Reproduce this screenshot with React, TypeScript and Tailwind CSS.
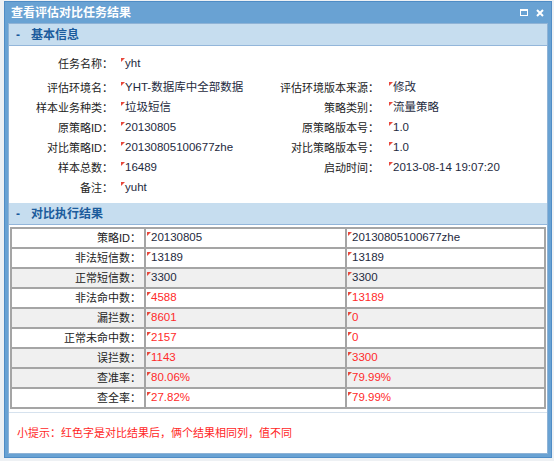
import React from "react";

const FONT = { fontFamily: '"Liberation Sans", "Noto Sans CJK SC", sans-serif' };

function Mark() {
  return (
    <span className="absolute left-0 top-[1px] w-0 h-0 border-t-[4px] border-t-[#e8483c] border-r-[4px] border-r-transparent" />
  );
}

function Val({ children, red = false }: { children: React.ReactNode; red?: boolean }) {
  return (
    <span className={"relative pl-[4px] text-[11.5px] " + (red ? "text-[#ff2a2a]" : "text-[#1e2a3e]")}>
      <Mark />
      {children}
    </span>
  );
}

function SectionHeader({ title }: { title: string }) {
  return (
    <div className="h-[22px] bg-[#c6ddef] border-b border-[#93b6da] flex items-center pl-[7px] text-[12px] font-bold text-[#1b5b9c]">
      <span className="w-[15px]">-</span>
      <span>{title}</span>
    </div>
  );
}

type Row = { l1: string; v1?: string; l2?: string; v2?: string };

const formRows: Row[] = [
  { l1: "评估环境名：", v1: "YHT-数据库中全部数据", l2: "评估环境版本来源：", v2: "修改" },
  { l1: "样本业务种类：", v1: "垃圾短信", l2: "策略类别：", v2: "流量策略" },
  { l1: "原策略ID：", v1: "20130805", l2: "原策略版本号：", v2: "1.0" },
  { l1: "对比策略ID：", v1: "20130805100677zhe", l2: "对比策略版本号：", v2: "1.0" },
  { l1: "样本总数：", v1: "16489", l2: "启动时间：", v2: "2013-08-14 19:07:20" },
  { l1: "备注：", v1: "yuht" },
];

type TRow = { label: string; a: string; b: string; red: boolean; gray: boolean };
const tableRows: TRow[] = [
  { label: "策略ID：", a: "20130805", b: "20130805100677zhe", red: false, gray: false },
  { label: "非法短信数：", a: "13189", b: "13189", red: false, gray: false },
  { label: "正常短信数：", a: "3300", b: "3300", red: false, gray: true },
  { label: "非法命中数：", a: "4588", b: "13189", red: true, gray: false },
  { label: "漏拦数：", a: "8601", b: "0", red: true, gray: true },
  { label: "正常未命中数：", a: "2157", b: "0", red: true, gray: false },
  { label: "误拦数：", a: "1143", b: "3300", red: true, gray: true },
  { label: "查准率：", a: "80.06%", b: "79.99%", red: true, gray: true },
  { label: "查全率：", a: "27.82%", b: "79.99%", red: true, gray: false },
];

export default function App() {
  return (
    <div className="w-[554px] h-[461px] bg-[#eef1f4] overflow-hidden pt-[1px] pl-[4px]" style={FONT}>
      <div className="w-[548px] h-[457px] bg-[#69a2d3] border border-[#4f8cc5] flex flex-col px-[3px] pb-[3px]">
        {/* title bar */}
        <div className="h-[21px] flex items-center justify-between pl-[3px] pr-[4px] shrink-0">
          <span className="text-white text-[12px] font-bold">查看评估对比任务结果</span>
          <div className="flex items-center gap-[8px]">
            <span className="w-[8px] h-[7px] border border-white border-t-[2px]" />
            <svg width="8" height="8" viewBox="0 0 8 8">
              <path d="M1 1 L7 7 M7 1 L1 7" stroke="white" strokeWidth="2" />
            </svg>
          </div>
        </div>
        {/* body */}
        <div className="flex-1 bg-white flex flex-col border border-[#8fb3d6]">
          <SectionHeader title="基本信息" />
          <div className="h-[157px] text-[11px] text-[#222] pt-[8px]">
            <div className="grid grid-cols-[104px_166px_100px_1fr] h-[20px] items-center">
              <span className="text-right">任务名称：</span>
              <span className="pl-[8px]"><Val>yht</Val></span>
              <span />
              <span />
            </div>
            <div className="h-[4px]" />
            {formRows.map((r, i) => (
              <div key={i} className="grid grid-cols-[104px_166px_100px_1fr] h-[20px] items-center">
                <span className="text-right whitespace-nowrap">{r.l1}</span>
                <span className="pl-[8px] whitespace-nowrap">{r.v1 && <Val>{r.v1}</Val>}</span>
                <span className="text-right whitespace-nowrap">{r.l2}</span>
                <span className="pl-[10px] whitespace-nowrap">{r.v2 && <Val>{r.v2}</Val>}</span>
              </div>
            ))}
          </div>
          <SectionHeader title="对比执行结果" />
          <div className="pt-[2px] pl-[1px] pr-[1px]">
            <table className="w-full border-collapse border-2 border-[#a5a5a5] text-[11px] text-[#222]">
              <colgroup>
                <col className="w-[134px]" />
                <col className="w-[201px]" />
                <col />
              </colgroup>
              <tbody>
                {tableRows.map((r, i) => (
                  <tr key={i} className={"h-[20px] " + (r.gray ? "bg-[#f0f0f0]" : "bg-white")}>
                    <td className="border-2 border-[#a5a5a5] text-right pr-[3px] p-0 whitespace-nowrap">{r.label}</td>
                    <td className="border-2 border-[#a5a5a5] pl-[1px] p-0 whitespace-nowrap">
                      <Val red={r.red}>{r.a}</Val>
                    </td>
                    <td className="border-2 border-[#a5a5a5] pl-[1px] p-0 whitespace-nowrap">
                      <Val red={r.red}>{r.b}</Val>
                    </td>
                  </tr>
                ))}
              </tbody>
            </table>
          </div>
          <div className="flex-1 border-t border-[#d6e2ee] mt-[3px] flex items-center pl-[8px] text-[11px] text-[#ff1f1f]">
            小提示：红色字是对比结果后，俩个结果相同列，值不同
          </div>
        </div>
      </div>
    </div>
  );
}
